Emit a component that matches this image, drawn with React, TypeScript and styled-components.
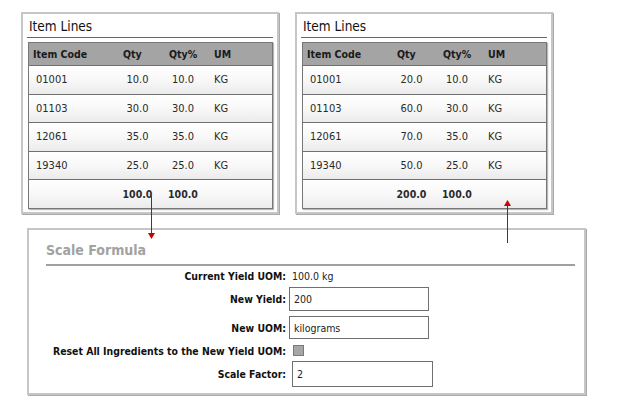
import React from "react";
import styled, { createGlobalStyle } from "styled-components";

const Global = createGlobalStyle`
  html, body { margin: 0; padding: 0; background: #fff; }
  body {
    font-family: "DejaVu Sans Condensed", "DejaVu Sans", sans-serif;
    font-stretch: condensed;
    color: #1e1e1e;
  }
`;

const Page = styled.div`
  position: relative;
  width: 620px;
  height: 410px;
  box-sizing: border-box;
  padding: 12px 0 0 21px;
`;

const TopRow = styled.div`
  display: flex;
  gap: 16px;
`;

const Card = styled.section`
  width: 258px;
  height: 202px;
  box-sizing: border-box;
  border: 2px solid #c6c6c6;
  box-shadow: 1px 1px 0 #a9a9a9;
  padding: 4px;
  background: #fff;
`;

const CardTitle = styled.h2`
  margin: 0;
  padding: 0 0 3px 2px;
  font-size: 13.5px;
  font-weight: normal;
  line-height: 16px;
  color: #111;
  border-bottom: 1px solid #666;
`;

const Table = styled.div`
  margin: 4px 0 0 1px;
  border: 1px solid #777;
  box-shadow: 1px 1px 1px rgba(0, 0, 0, 0.28);
`;

const Row = styled.div<{ $head?: boolean; $total?: boolean }>`
  display: grid;
  grid-template-columns: 86px 45px 46px 1fr;
  align-items: center;
  height: ${(p) => (p.$head ? "22px" : "27.6px")};
  background: ${(p) =>
    p.$head ? "#a4a4a4" : "linear-gradient(#ffffff 0%, #f8f8f8 50%, #ebebeb 100%)"};
  border-top: ${(p) => (p.$head ? "none" : "1px solid #707070")};
  font-size: ${(p) => (p.$head ? "10.5px" : p.$total ? "10.5px" : "11px")};
  font-weight: ${(p) => (p.$head || p.$total ? "bold" : "normal")};
  color: ${(p) => (p.$head ? "#1a1a1a" : "#2a2a2a")};
`;

const Cell = styled.div<{ $align?: "left" | "center"; $pad?: number }>`
  text-align: ${(p) => p.$align ?? "left"};
  padding-left: ${(p) => p.$pad ?? 0}px;
  white-space: nowrap;
`;

const Panel = styled.section`
  margin: 14px 0 0 6px;
  width: 559px;
  height: 167px;
  box-sizing: border-box;
  border: 2px solid #c6c6c6;
  box-shadow: 1px 1px 0 #a9a9a9;
  padding: 11px 9px 0 17px;
`;

const PanelTitle = styled.h2`
  margin: 0;
  padding-bottom: 5px;
  font-size: 14px;
  line-height: 18px;
  font-weight: bold;
  color: #a2a2a2;
  border-bottom: 2px solid #a0a0a0;
`;

const FormRow = styled.div<{ $h: number; $mt: number }>`
  display: flex;
  align-items: center;
  height: ${(p) => p.$h}px;
  margin-top: ${(p) => p.$mt}px;
`;

const Label = styled.div`
  width: 240px;
  flex: none;
  text-align: right;
  font-size: 10.4px;
  font-weight: bold;
  color: #111;
  white-space: nowrap;
  margin-right: 3px;
`;

const Value = styled.div`
  font-size: 10.5px;
  padding-left: 3px;
  color: #222;
`;

const TextInput = styled.input<{ $w: number; $ml?: number }>`
  width: ${(p) => p.$w}px;
  height: 100%;
  box-sizing: border-box;
  margin: 0 0 0 ${(p) => p.$ml ?? 0}px;
  padding: 0 4px;
  border: 1px solid #6f6f6f;
  border-radius: 0;
  font-family: inherit;
  font-stretch: condensed;
  font-size: 10.5px;
  color: #222;
  background: #fff;
  outline: none;
`;

const CheckBox = styled.span`
  display: block;
  width: 11px;
  height: 11px;
  margin-left: 4px;
  box-sizing: border-box;
  background: #a6a6a6;
  border: 1px solid #7a7a7a;
`;

const Arrow = styled.svg<{ $left: number; $top: number }>`
  position: absolute;
  left: ${(p) => p.$left}px;
  top: ${(p) => p.$top}px;
  overflow: visible;
`;

type Line = { code: string; qty: string; pct: string; um: string };

const ItemCard: React.FC<{ lines: Line[]; total: string }> = ({ lines, total }) => (
  <Card>
    <CardTitle>Item Lines</CardTitle>
    <Table>
      <Row $head>
        <Cell $pad={4}>Item Code</Cell>
        <Cell $pad={8}>Qty</Cell>
        <Cell $pad={9}>Qty%</Cell>
        <Cell $pad={8}>UM</Cell>
      </Row>
      {lines.map((l) => (
        <Row key={l.code}>
          <Cell $pad={7}>{l.code}</Cell>
          <Cell $align="center">{l.qty}</Cell>
          <Cell $align="center">{l.pct}</Cell>
          <Cell $pad={8}>{l.um}</Cell>
        </Row>
      ))}
      <Row $total>
        <Cell />
        <Cell $align="center">{total}</Cell>
        <Cell $align="center">100.0</Cell>
        <Cell />
      </Row>
    </Table>
  </Card>
);

const before: Line[] = [
  { code: "01001", qty: "10.0", pct: "10.0", um: "KG" },
  { code: "01103", qty: "30.0", pct: "30.0", um: "KG" },
  { code: "12061", qty: "35.0", pct: "35.0", um: "KG" },
  { code: "19340", qty: "25.0", pct: "25.0", um: "KG" },
];

const after: Line[] = [
  { code: "01001", qty: "20.0", pct: "10.0", um: "KG" },
  { code: "01103", qty: "60.0", pct: "30.0", um: "KG" },
  { code: "12061", qty: "70.0", pct: "35.0", um: "KG" },
  { code: "19340", qty: "50.0", pct: "25.0", um: "KG" },
];

export default function App() {
  return (
    <Page>
      <Global />
      <TopRow>
        <ItemCard lines={before} total="100.0" />
        <ItemCard lines={after} total="200.0" />
      </TopRow>
      <Panel>
        <PanelTitle>Scale Formula</PanelTitle>
        <FormRow $h={16} $mt={2}>
          <Label>Current Yield UOM:</Label>
          <Value>100.0 kg</Value>
        </FormRow>
        <FormRow $h={24} $mt={3}>
          <Label>New Yield:</Label>
          <TextInput $w={140} defaultValue="200" />
        </FormRow>
        <FormRow $h={23} $mt={5}>
          <Label>New UOM:</Label>
          <TextInput $w={140} defaultValue="kilograms" />
        </FormRow>
        <FormRow $h={13} $mt={5}>
          <Label>Reset All Ingredients to the New Yield UOM:</Label>
          <CheckBox />
        </FormRow>
        <FormRow $h={26} $mt={4}>
          <Label>Scale Factor:</Label>
          <TextInput $w={141} $ml={3} defaultValue="2" />
        </FormRow>
      </Panel>
      <Arrow $left={147} $top={196} width="9" height="44" viewBox="0 0 9 44">
        <line x1="4.5" y1="0" x2="4.5" y2="38" stroke="#cc0000" strokeWidth="1" />
        <polygon points="1,37 8,37 4.5,43" fill="#cc0000" />
      </Arrow>
      <Arrow $left={503} $top={199} width="9" height="45" viewBox="0 0 9 45">
        <line x1="4.5" y1="6" x2="4.5" y2="44" stroke="#cc0000" strokeWidth="1" />
        <polygon points="1,7 8,7 4.5,1" fill="#cc0000" />
      </Arrow>
    </Page>
  );
}
